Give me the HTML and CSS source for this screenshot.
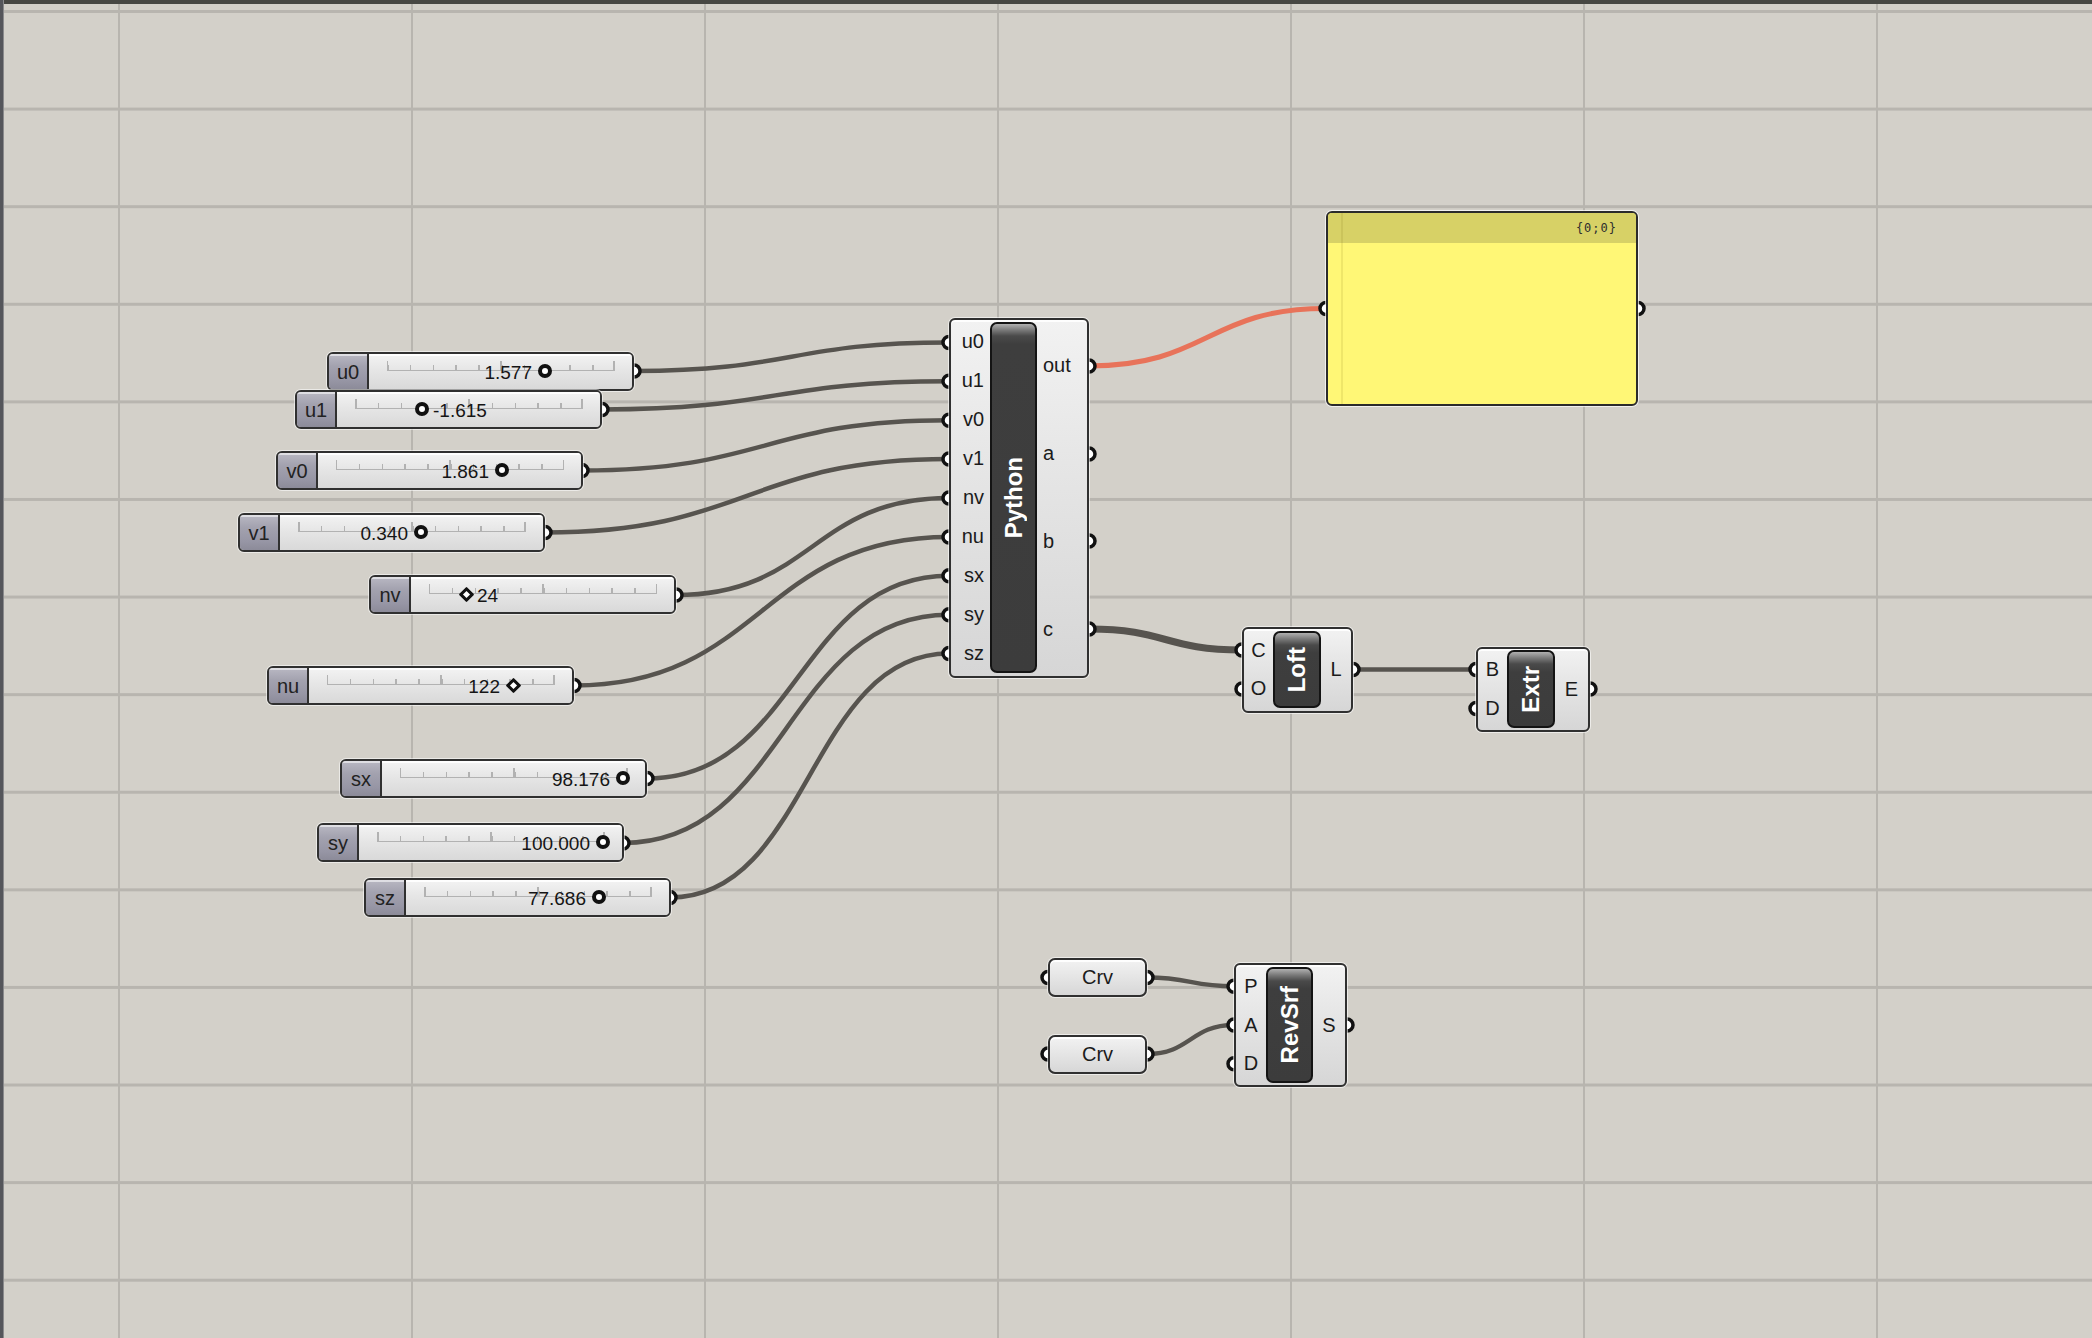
FILE: index.html
```html
<!DOCTYPE html>
<html lang="en">
<head>
<meta charset="utf-8">
<title>Grasshopper canvas</title>
<link rel="stylesheet" href="styles.css">
</head>
<body>
<div class="canvas">
  <svg class="wires" width="2092" height="1338" viewBox="0 0 2092 1338">
    <g class="wire">
      <path d="M634 371 C791.5 371 791.5 342.4 949 342.4"/>
      <path d="M602 409.5 C775.5 409.5 775.5 381.3 949 381.3"/>
      <path d="M582 470.5 C765.5 470.5 765.5 420.2 949 420.2"/>
      <path d="M545 532.5 C747 532.5 747 459.1 949 459.1"/>
      <path d="M676 595 C812.5 595 812.5 498 949 498"/>
      <path d="M574 685.5 C761.5 685.5 761.5 536.9 949 536.9"/>
      <path d="M647 778.5 C798 778.5 798 575.8 949 575.8"/>
      <path d="M623 843 C786 843 786 614.7 949 614.7"/>
      <path d="M670 897.5 C809.5 897.5 809.5 653.6 949 653.6"/>
      <path d="M1353 669.5 L1476 669.5"/>
      <path d="M1147 977.5 C1190.5 977.5 1190.5 986.3 1234 986.3"/>
      <path d="M1147 1054 C1190.5 1054 1190.5 1025 1234 1025"/>
    </g>
    <path class="wire-list" d="M1089 629 C1165.5 629 1165.5 650 1242 650"/>
    <path class="wire-sel" d="M1089 366 C1207.5 366 1207.5 308.5 1326 308.5"/>
    <g class="grips">
      <circle cx="634" cy="371" r="5.5"/>
      <circle cx="602" cy="409.5" r="5.5"/>
      <circle cx="582" cy="470.5" r="5.5"/>
      <circle cx="545" cy="532.5" r="5.5"/>
      <circle cx="676" cy="595" r="5.5"/>
      <circle cx="574" cy="685.5" r="5.5"/>
      <circle cx="647" cy="778.5" r="5.5"/>
      <circle cx="623" cy="843" r="5.5"/>
      <circle cx="670" cy="897.5" r="5.5"/>
      <circle cx="949" cy="342.4" r="5.5"/>
      <circle cx="949" cy="381.3" r="5.5"/>
      <circle cx="949" cy="420.2" r="5.5"/>
      <circle cx="949" cy="459.1" r="5.5"/>
      <circle cx="949" cy="498" r="5.5"/>
      <circle cx="949" cy="536.9" r="5.5"/>
      <circle cx="949" cy="575.8" r="5.5"/>
      <circle cx="949" cy="614.7" r="5.5"/>
      <circle cx="949" cy="653.6" r="5.5"/>
      <circle cx="1089" cy="366" r="5.5"/>
      <circle cx="1089" cy="454" r="5.5"/>
      <circle cx="1089" cy="541" r="5.5"/>
      <circle cx="1089" cy="629" r="5.5"/>
      <circle cx="1326" cy="308.5" r="5.5"/>
      <circle cx="1638" cy="308.5" r="5.5"/>
      <circle cx="1242" cy="650" r="5.5"/>
      <circle cx="1242" cy="689" r="5.5"/>
      <circle cx="1353" cy="669.5" r="5.5"/>
      <circle cx="1476" cy="669.5" r="5.5"/>
      <circle cx="1476" cy="708.5" r="5.5"/>
      <circle cx="1590" cy="689" r="5.5"/>
      <circle cx="1048" cy="977.5" r="5.5"/>
      <circle cx="1147" cy="977.5" r="5.5"/>
      <circle cx="1048" cy="1054" r="5.5"/>
      <circle cx="1147" cy="1054" r="5.5"/>
      <circle cx="1234" cy="986.3" r="5.5"/>
      <circle cx="1234" cy="1025" r="5.5"/>
      <circle cx="1234" cy="1063.7" r="5.5"/>
      <circle cx="1347" cy="1025" r="5.5"/>
    </g>
  </svg>

  <!-- number sliders -->
  <div class="slider n-u0">
    <div class="s-label">u0</div>
    <div class="s-body"><div class="ruler"></div>
      <div class="thumb" style="left:176px"><span class="val l">1.577</span><i class="knob"></i></div></div>
  </div>
  <div class="slider n-u1">
    <div class="s-label">u1</div>
    <div class="s-body"><div class="ruler"></div>
      <div class="thumb" style="left:85px"><i class="knob"></i><span class="val r">-1.615</span></div></div>
  </div>
  <div class="slider n-v0">
    <div class="s-label">v0</div>
    <div class="s-body"><div class="ruler"></div>
      <div class="thumb" style="left:184px"><span class="val l">1.861</span><i class="knob"></i></div></div>
  </div>
  <div class="slider n-v1">
    <div class="s-label">v1</div>
    <div class="s-body"><div class="ruler"></div>
      <div class="thumb" style="left:141px"><span class="val l">0.340</span><i class="knob"></i></div></div>
  </div>
  <div class="slider n-nv">
    <div class="s-label">nv</div>
    <div class="s-body"><div class="ruler"></div>
      <div class="thumb" style="left:55px"><i class="knob dia"></i><span class="val r">24</span></div></div>
  </div>
  <div class="slider n-nu">
    <div class="s-label">nu</div>
    <div class="s-body"><div class="ruler"></div>
      <div class="thumb" style="left:204px"><span class="val l">122</span><i class="knob dia"></i></div></div>
  </div>
  <div class="slider n-sx">
    <div class="s-label">sx</div>
    <div class="s-body"><div class="ruler"></div>
      <div class="thumb" style="left:241px"><span class="val l">98.176</span><i class="knob"></i></div></div>
  </div>
  <div class="slider n-sy">
    <div class="s-label">sy</div>
    <div class="s-body"><div class="ruler"></div>
      <div class="thumb" style="left:244px"><span class="val l">100.000</span><i class="knob"></i></div></div>
  </div>
  <div class="slider n-sz">
    <div class="s-label">sz</div>
    <div class="s-body"><div class="ruler"></div>
      <div class="thumb" style="left:193px"><span class="val l">77.686</span><i class="knob"></i></div></div>
  </div>

  <!-- Python component -->
  <div class="comp n-py">
    <div class="ins right">
      <span>u0</span><span>u1</span><span>v0</span><span>v1</span><span>nv</span><span>nu</span><span>sx</span><span>sy</span><span>sz</span>
    </div>
    <div class="bar"><span>Python</span></div>
    <div class="outs left">
      <span>out</span><span>a</span><span>b</span><span>c</span>
    </div>
  </div>

  <!-- Panel -->
  <div class="panel n-panel">
    <div class="p-head">{0;0}</div>
    <div class="p-body"></div>
  </div>

  <!-- Loft -->
  <div class="comp n-loft">
    <div class="ins"><span>C</span><span>O</span></div>
    <div class="bar"><span>Loft</span></div>
    <div class="outs"><span>L</span></div>
  </div>

  <!-- Extr -->
  <div class="comp n-extr">
    <div class="ins"><span>B</span><span>D</span></div>
    <div class="bar"><span>Extr</span></div>
    <div class="outs"><span>E</span></div>
  </div>

  <!-- Curve params -->
  <div class="param n-crv1">Crv</div>
  <div class="param n-crv2">Crv</div>

  <!-- RevSrf -->
  <div class="comp n-rev">
    <div class="ins"><span>P</span><span>A</span><span>D</span></div>
    <div class="bar"><span>RevSrf</span></div>
    <div class="outs"><span>S</span></div>
  </div>
</div>
</body>
</html>
```

FILE: styles.css
```css
html, body {
  margin: 0;
  padding: 0;
}

body {
  width: 2092px;
  height: 1338px;
  overflow: hidden;
  font-family: "Liberation Sans", Arial, sans-serif;
  color: #1b1b1b;
}

/* ---------- canvas ---------- */
.canvas {
  position: relative;
  width: 2092px;
  height: 1338px;
  background-color: #d3d0c9;
  background-image:
    linear-gradient(90deg, #b8b5af 0 2px, transparent 2px),
    linear-gradient(180deg, #b8b5af 0 3px, transparent 3px);
  background-size: 293px 100%, 100% 97.6px;
  background-position: 118px 0, 0 10px;
  overflow: hidden;
}

.canvas::before {
  content: "";
  position: absolute;
  left: 0;
  top: 0;
  right: 0;
  height: 4px;
  background: #474743;
  z-index: 5;
}

.canvas::after {
  content: "";
  position: absolute;
  left: 0;
  top: 0;
  bottom: 0;
  width: 4px;
  background: linear-gradient(90deg, #55565b 0 3px, #8a8a8c 3px);
  z-index: 5;
}

/* ---------- wires ---------- */
.wires {
  position: absolute;
  left: 0;
  top: 0;
}

.wire path {
  fill: none;
  stroke: #57544f;
  stroke-width: 4.5;
}

.wire-list {
  fill: none;
  stroke: #57544f;
  stroke-width: 7;
}

.wire-sel {
  fill: none;
  stroke: #e8735a;
  stroke-width: 5;
}

.grips circle {
  fill: #fff;
  stroke: #111;
  stroke-width: 3.5;
  r: 6px;
}

/* ---------- node placement on the free canvas ---------- */
.slider, .comp, .panel, .param {
  position: absolute;
  box-sizing: border-box;
}

.n-u0 { left: 327px; top: 352px; }
.n-u1 { left: 295px; top: 390px; }
.n-v0 { left: 276px; top: 451px; }
.n-v1 { left: 238px; top: 513px; }
.n-nv { left: 369px; top: 575px; }
.n-nu { left: 267px; top: 666px; }
.n-sx { left: 340px; top: 759px; }
.n-sy { left: 317px; top: 823px; }
.n-sz { left: 364px; top: 878px; }

.n-py    { left: 949px;  top: 318px; width: 140px; height: 360px; padding: 2px 0 3px; }
.n-panel { left: 1326px; top: 211px; width: 312px; height: 195px; }
.n-loft  { left: 1242px; top: 627px; width: 111px; height: 86px;  padding: 2px 0 3px; }
.n-extr  { left: 1476px; top: 647px; width: 114px; height: 85px;  padding: 1px 0 2px; }
.n-crv1  { left: 1048px; top: 958px; }
.n-crv2  { left: 1048px; top: 1035px; }
.n-rev   { left: 1234px; top: 963px; width: 113px; height: 124px; padding: 2px 0 2px; }

/* ---------- number slider ---------- */
.slider {
  width: 307px;
  height: 39px;
  display: flex;
  border: 2px solid #303030;
  border-radius: 6px;
  overflow: hidden;
  box-shadow: 0 0 0 1px rgba(255, 255, 255, 0.55);
}

.s-label {
  width: 38px;
  flex: none;
  border-right: 2px solid #303030;
  background: linear-gradient(180deg, #b9b8c3 0, #a3a2af 35%, #9796a5 75%, #8c8b99 100%);
  box-shadow: inset 0 2px 0 rgba(255, 255, 255, 0.55);
  display: flex;
  align-items: center;
  justify-content: center;
  font-size: 20px;
  color: #222;
  padding-top: 1px;
}

.s-body {
  position: relative;
  flex: 1;
  display: flex;
  align-items: flex-start;
  padding: 0 17px 0 18px;
  background: linear-gradient(180deg, #f3f3f3 0, #e6e6e6 45%, #d9d9d9 100%);
  box-shadow: inset 0 2px 0 rgba(255, 255, 255, 0.9);
}

.ruler {
  flex: 1;
  height: 10px;
  margin-top: 7px;
  box-sizing: border-box;
  border-bottom: 1.5px solid #b2b2b2;
  background-image:
    linear-gradient(90deg, #b2b2b2 0 1.5px, transparent 1.5px calc(50% - 0.75px), #b2b2b2 calc(50% - 0.75px) calc(50% + 0.75px), transparent calc(50% + 0.75px) calc(100% - 1.5px), #b2b2b2 calc(100% - 1.5px)),
    repeating-linear-gradient(90deg, #b2b2b2 0 1.5px, transparent 1.5px 10%);
  background-size: 100% 100%, 100% 5px;
  background-position: 0 0, 0 100%;
  background-repeat: no-repeat;
}

.thumb {
  position: absolute;
  top: 17px;
  width: 0;
  height: 0;
}

.knob {
  position: absolute;
  left: -7px;
  top: -7px;
  width: 14px;
  height: 14px;
  box-sizing: border-box;
  border: 4px solid #111;
  border-radius: 50%;
  background: #fff;
}

.knob.dia {
  left: -5.5px;
  top: -5.5px;
  width: 11px;
  height: 11px;
  border-width: 3px;
  border-radius: 1px;
  transform: rotate(45deg);
}

.val {
  position: absolute;
  top: -9px;
  font-size: 19px;
  line-height: 22px;
  white-space: nowrap;
  color: #151515;
}

.val.l { right: 13px; }
.val.r { left: 11px; }

/* ---------- components ---------- */
.comp {
  display: flex;
  border: 2px solid #303030;
  border-radius: 6px;
  background: linear-gradient(180deg, #f2f2f2 0, #e6e6e6 40%, #d6d6d6 100%);
  box-shadow: 0 0 0 1px rgba(255, 255, 255, 0.6), inset 0 2px 0 rgba(255, 255, 255, 0.9);
  font-size: 20px;
}

.ins, .outs {
  display: flex;
  flex-direction: column;
}

.ins span, .outs span {
  flex: 1;
  display: flex;
  align-items: center;
  justify-content: center;
}

.n-py .ins  { width: 39px; }
.n-py .outs { flex: 1; }
.ins.right span { justify-content: flex-end; padding-right: 6px; }
.outs.left span { justify-content: flex-start; padding-left: 6px; }

.n-loft .ins { width: 29px; }
.n-loft .outs { flex: 1; }
.n-extr .ins { width: 29px; }
.n-extr .outs { flex: 1; }
.n-rev .ins { width: 30px; }
.n-rev .outs { flex: 1; }

.bar {
  width: 47px;
  flex: none;
  box-sizing: border-box;
  border: 2px solid #141414;
  border-radius: 7px;
  background: linear-gradient(180deg, #b0b0b0 0, #7a7a7a 6px, #4a4a4a 12px, #3e3e3e 20px, #3c3c3c 100%);
  display: flex;
  align-items: center;
  justify-content: center;
}

.n-loft .bar, .n-extr .bar { width: 48px; }

.bar span {
  writing-mode: vertical-rl;
  transform: rotate(180deg);
  color: #fff;
  font-weight: bold;
  font-size: 24px;
  line-height: 1;
}

/* ---------- panel ---------- */
.panel {
  display: flex;
  flex-direction: column;
  border: 2px solid #2b2b2b;
  border-radius: 6px;
  overflow: hidden;
  background: #fff776;
  box-shadow: 0 0 0 1px rgba(255, 255, 255, 0.7);
}

.panel::before {
  content: "";
  position: absolute;
  left: 13px;
  top: 0;
  bottom: 0;
  width: 2px;
  background: rgba(120, 110, 20, 0.12);
}

.p-head {
  height: 30px;
  flex: none;
  background: #d7d166;
  display: flex;
  align-items: center;
  justify-content: flex-end;
  padding-right: 19px;
  font-family: "DejaVu Sans Mono", "Liberation Mono", monospace;
  font-size: 12px;
  letter-spacing: 1px;
  color: #2e2e2e;
}

.p-body {
  flex: 1;
}

/* ---------- params ---------- */
.param {
  width: 99px;
  height: 39px;
  border: 2px solid #303030;
  border-radius: 7px;
  background: linear-gradient(180deg, #f2f2f2 0, #e6e6e6 45%, #d7d7d7 100%);
  box-shadow: 0 0 0 1px rgba(255, 255, 255, 0.6), inset 0 2px 0 rgba(255, 255, 255, 0.9);
  display: flex;
  align-items: center;
  justify-content: center;
  font-size: 20px;
}
```
